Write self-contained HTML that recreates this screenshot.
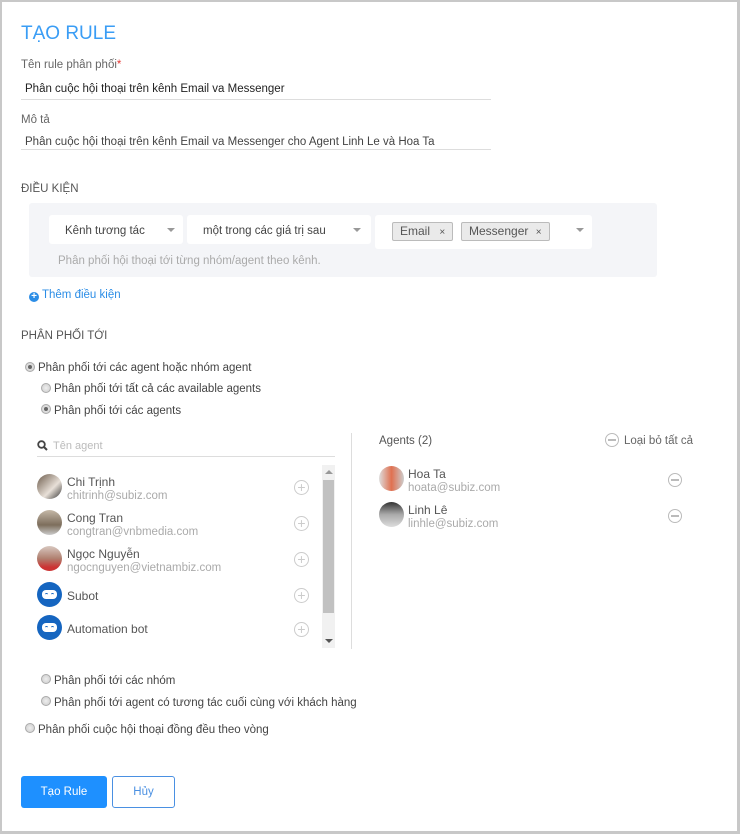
<!DOCTYPE html>
<html><head><meta charset="utf-8"><style>
*{box-sizing:border-box;margin:0;padding:0}
body{width:740px;height:834px;overflow:hidden;background:#fff;font-family:"Liberation Sans",sans-serif;font-size:11.5px;color:#444;position:relative}
.frame{position:absolute;inset:0;border:2px solid #c8c8c8;border-right-width:3px;border-bottom-width:3px}
.a{position:absolute;white-space:nowrap;margin-top:2px}
.line{position:absolute;height:1px;background:#ddd}
.sel{position:absolute;background:#fff;border-radius:3px}
.caret{position:absolute;width:0;height:0;border-left:4px solid transparent;border-right:4px solid transparent;border-top:4px solid #999}
.tag{position:absolute;background:#eaeaea;border:1px solid #bbb;border-radius:2px;height:19px;line-height:17px;padding:0 7px;font-size:12px;color:#555}
.r{position:absolute;width:10px;height:10px;border-radius:50%;border:1px solid #aaa;background:radial-gradient(#eee,#ccc)}
.r.on::after{content:"";position:absolute;left:2px;top:2px;width:4px;height:4px;border-radius:50%;background:#666}
.av{position:absolute;width:25px;height:25px;border-radius:50%;overflow:hidden}
.bot{position:absolute;width:25px;height:25px;border-radius:50%;background:#1565c0}
.bot i{position:absolute;left:5px;top:8px;width:15px;height:9px;border-radius:4px;background:#fff}
.bot i::before,.bot i::after{content:"";position:absolute;top:3px;width:3px;height:2px;border-top:1px solid #1565c0;border-radius:2px 2px 0 0}
.bot i::before{left:3px}.bot i::after{right:3px}
.pl{position:absolute;width:15px;height:15px;border-radius:50%;border:1px solid #ccc;color:#ccc;font-size:14px;line-height:12px;text-align:center}
.mi{position:absolute;width:14px;height:14px;border-radius:50%;border:1px solid #bbb}
.mi::after{content:"";position:absolute;left:2px;top:5px;width:8px;height:2px;background:#bbb}
.nm{font-size:12px;color:#555}
.em{font-size:11.5px;color:#aaa}
</style></head><body>
<div class="frame"></div>
<div class="a" style="left:21px;top:21px;font-size:19px;color:#3a9df5">TẠO RULE</div>
<div class="a" style="left:21px;top:57px;color:#666">Tên rule phân phối<span style="color:#e53935">*</span></div>
<div class="a" style="left:25px;top:81px;color:#222">Phân cuộc hội thoại trên kênh Email va Messenger</div>
<div class="line" style="left:21px;top:99px;width:470px"></div>
<div class="a" style="left:21px;top:112px;color:#666">Mô tả</div>
<div class="a" style="left:25px;top:134px;color:#444">Phân cuộc hội thoại trên kênh Email va Messenger cho Agent Linh Le và Hoa Ta</div>
<div class="line" style="left:21px;top:149px;width:470px"></div>
<div class="a" style="left:21px;top:181px;color:#555">ĐIỀU KIỆN</div>
<div style="position:absolute;left:29px;top:203px;width:628px;height:74px;background:#f4f5f8;border-radius:3px"></div>
<div class="sel" style="left:49px;top:215px;width:134px;height:29px"><span class="a" style="left:16px;top:8px;color:#444">Kênh tương tác</span><span class="caret" style="left:118px;top:13px"></span></div>
<div class="sel" style="left:187px;top:215px;width:184px;height:29px"><span class="a" style="left:16px;top:8px;color:#444">một trong các giá trị sau</span><span class="caret" style="left:166px;top:13px"></span></div>
<div class="sel" style="left:375px;top:215px;width:217px;height:34px"><span class="caret" style="left:201px;top:13px"></span></div>
<div class="tag" style="left:392px;top:222px">Email <span style="font-size:10px;margin-left:6px">×</span></div>
<div class="tag" style="left:461px;top:222px">Messenger <span style="font-size:10px;margin-left:4px">×</span></div>
<div class="a" style="left:58px;top:253px;color:#aaa">Phân phối hội thoại tới từng nhóm/agent theo kênh.</div>
<div class="a" style="left:29px;top:287px;color:#2b8de6"><span style="display:inline-block;width:10px;height:10px;border-radius:50%;background:#2b8de6;color:#fff;font-size:10px;line-height:10px;text-align:center;font-weight:bold;vertical-align:-1px">+</span> Thêm điều kiện</div>
<div class="a" style="left:21px;top:328px;color:#555">PHÂN PHỐI TỚI</div>
<div class="r on" style="left:25px;top:362px"></div><div class="a" style="left:38px;top:360px">Phân phối tới các agent hoặc nhóm agent</div>
<div class="r" style="left:41px;top:383px"></div><div class="a" style="left:54px;top:381px">Phân phối tới tất cả các available agents</div>
<div class="r on" style="left:41px;top:404px"></div><div class="a" style="left:54px;top:403px">Phân phối tới các agents</div>
<svg class="a" style="left:37px;top:438px" width="11" height="11" viewBox="0 0 11 11"><circle cx="4.5" cy="4.5" r="3.3" fill="none" stroke="#444" stroke-width="1.8"/><path d="M7 7l3 3" stroke="#444" stroke-width="2"/></svg>
<div class="a" style="left:53px;top:438px;color:#bbb;font-size:11px">Tên agent</div>
<div class="line" style="left:37px;top:456px;width:298px"></div>
<div style="position:absolute;left:322px;top:465px;width:13px;height:183px;background:#f1f1f1"></div>
<div style="position:absolute;left:323px;top:480px;width:11px;height:133px;background:#c1c1c1"></div>
<div class="caret" style="left:325px;top:470px;border-top:0;border-bottom:4px solid #999"></div>
<div class="caret" style="left:325px;top:639px;border-top-color:#555"></div>
<div class="av" style="left:37px;top:474px;background:linear-gradient(135deg,#6b5a4a,#e8e0d8 60%,#333)"></div>
<div class="a nm" style="left:67px;top:473px">Chi Trịnh</div><div class="a em" style="left:67px;top:488px">chitrinh@subiz.com</div><div class="pl" style="left:294px;top:480px">+</div>
<div class="av" style="left:37px;top:510px;background:linear-gradient(#c5b9a8,#7d6e5c 60%,#ccc)"></div>
<div class="a nm" style="left:67px;top:509px">Cong Tran</div><div class="a em" style="left:67px;top:524px">congtran@vnbmedia.com</div><div class="pl" style="left:294px;top:516px">+</div>
<div class="av" style="left:37px;top:546px;background:linear-gradient(#d8c8c0,#b08070 50%,#c33 85%)"></div>
<div class="a nm" style="left:67px;top:545px">Ngọc Nguyễn</div><div class="a em" style="left:67px;top:560px">ngocnguyen@vietnambiz.com</div><div class="pl" style="left:294px;top:552px">+</div>
<div class="bot" style="left:37px;top:582px"><i></i></div>
<div class="a nm" style="left:67px;top:587px">Subot</div><div class="pl" style="left:294px;top:588px">+</div>
<div class="bot" style="left:37px;top:615px"><i></i></div>
<div class="a nm" style="left:67px;top:620px">Automation bot</div><div class="pl" style="left:294px;top:622px">+</div>
<div style="position:absolute;left:351px;top:433px;width:1px;height:216px;background:#ddd"></div>
<div class="a" style="left:379px;top:433px;color:#555">Agents (2)</div>
<div class="mi" style="left:605px;top:433px"></div><div class="a" style="left:624px;top:433px;color:#666">Loại bỏ tất cả</div>
<div class="av" style="left:379px;top:466px;background:linear-gradient(90deg,#ddd,#e07050 50%,#ccc)"></div>
<div class="a nm" style="left:408px;top:465px">Hoa Ta</div><div class="a em" style="left:408px;top:480px">hoata@subiz.com</div><div class="mi" style="left:668px;top:473px"></div>
<div class="av" style="left:379px;top:502px;background:linear-gradient(#333,#aaa 50%,#ddd)"></div>
<div class="a nm" style="left:408px;top:501px">Linh Lê</div><div class="a em" style="left:408px;top:516px">linhle@subiz.com</div><div class="mi" style="left:668px;top:509px"></div>
<div class="r" style="left:41px;top:674px"></div><div class="a" style="left:54px;top:673px">Phân phối tới các nhóm</div>
<div class="r" style="left:41px;top:696px"></div><div class="a" style="left:54px;top:695px">Phân phối tới agent có tương tác cuối cùng với khách hàng</div>
<div class="r" style="left:25px;top:723px"></div><div class="a" style="left:38px;top:722px">Phân phối cuộc hội thoại đồng đều theo vòng</div>
<div style="position:absolute;left:21px;top:776px;width:86px;height:32px;background:#1e90ff;border-radius:3px;color:#fff;text-align:center;line-height:32px">Tạo Rule</div>
<div style="position:absolute;left:112px;top:776px;width:63px;height:32px;border:1px solid #4a90e2;border-radius:3px;color:#4a90e2;text-align:center;line-height:30px">Hủy</div>
</body></html>
